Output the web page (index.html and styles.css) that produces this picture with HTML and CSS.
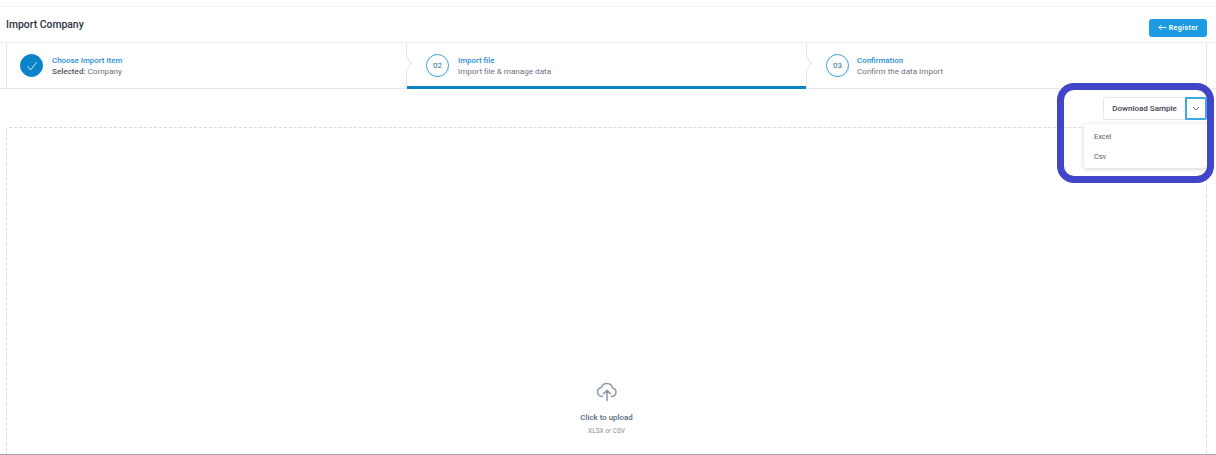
FILE: index.html
```html
<!DOCTYPE html>
<html lang="en">
<head>
    <meta charset="UTF-8">
    <title>Import Company</title>
    <link rel="stylesheet" href="styles.css">
</head>
<body>
    <div class="page">
        <!-- Header -->
        <div class="header">
            <h1>Import Company</h1>
            <button class="btn-register">
                <svg width="9" height="7" viewBox="0 0 9 7"><path d="M8.5 3.5 H1 M3.5 1 L1 3.5 L3.5 6" fill="none" stroke="#fff" stroke-width="1"/></svg>
                Register
            </button>
        </div>

        <!-- Steps -->
        <div class="steps">
            <div class="step">
                <span class="step-circle done">
                    <svg width="12" height="12" viewBox="0 0 12 12"><path d="M1.5 6.5 L4.6 10 L10.8 2" fill="none" stroke="#fff" stroke-width="0.8"/></svg>
                </span>
                <div>
                    <div class="step-title">Choose Import Item</div>
                    <div class="step-sub"><b>Selected:</b> Company</div>
                </div>
                <span class="chevron"></span>
            </div>
            <div class="step active">
                <span class="step-circle">02</span>
                <div>
                    <div class="step-title">Import file</div>
                    <div class="step-sub">Import file &amp; manage data</div>
                </div>
                <span class="chevron"></span>
            </div>
            <div class="step">
                <span class="step-circle">03</span>
                <div>
                    <div class="step-title">Confirmation</div>
                    <div class="step-sub">Confirm the data Import</div>
                </div>
            </div>
        </div>

        <!-- Download -->
        <div class="toolbar">
            <div class="split">
                <button class="btn-download">Download Sample</button>
                <button class="btn-caret">
                    <svg width="8" height="5" viewBox="0 0 8 5"><path d="M1 1 L4 4 L7 1" fill="none" stroke="#555" stroke-width="0.9"/></svg>
                </button>
                <div class="dropdown">
                    <div class="dropdown-item">Excel</div>
                    <div class="dropdown-item">Csv</div>
                </div>
            </div>
            <div class="highlight"></div>
        </div>

        <!-- Upload -->
        <div class="dropzone">
            <svg width="22" height="22" viewBox="0 0 22 22" fill="none" stroke="#8d98a8" stroke-width="1.5" stroke-linecap="round" stroke-linejoin="round">
                <path d="M6.5 16.5 H6 A4.6 4.6 0 0 1 5.2 7.4 A6 6 0 0 1 16.6 7.9 A4.4 4.4 0 0 1 16.4 16.5 H15.5"/>
                <path d="M11 20.5 V10.5 M7.6 13.6 L11 10.2 L14.4 13.6"/>
            </svg>
            <div class="upload-title">Click to upload</div>
            <div class="upload-sub">XLSX or CSV</div>
        </div>
    </div>
</body>
</html>
```

FILE: styles.css
```css
* { margin: 0; padding: 0; box-sizing: border-box; font-family: Roboto, sans-serif; }
html, body { height: 455px; overflow: hidden; background: #fff; }

.page { height: 455px; padding-top: 6px; border-bottom: 1px solid #a8a8a8; display: flex; flex-direction: column; }

/* Header */
.header { height: 36px; flex: none; border-top: 1px solid #eee; display: flex; align-items: center; justify-content: space-between; padding: 0 9px 0 6px; }
h1 { font-size: 10.4px; font-weight: 500; color: #2b3340; }
.btn-register { width: 58px; height: 18px; margin-top: 6px; border: none; border-radius: 3px; background: #1a9be2; color: #fff; font-size: 7px; font-weight: 700; letter-spacing: 0.4px; display: flex; align-items: center; justify-content: center; gap: 2px; }

/* Steps */
.steps { height: 47px; flex: none; padding: 0 9px 0 6px; border-top: 1px solid #eee; border-bottom: 1px solid #e6e6e6; display: grid; grid-template-columns: 400px 400px 401px; }
.step { position: relative; display: flex; align-items: center; gap: 9px; padding: 0 0 0 13px; border-left: 1px solid #e8e8e8; }
.step:last-child { border-right: 1px solid #e8e8e8; }
.step.active { padding-left: 19px; }
.step.active::after { content: ""; position: absolute; left: 0; right: 0; bottom: -1px; height: 3px; background: #0a84c8; }
.step:last-child { padding-left: 19px; gap: 8px; }
.step-circle { width: 23px; height: 23px; flex: none; border: 1px solid #3aa0dc; border-radius: 50%; display: flex; align-items: center; justify-content: center; font-size: 8px; color: #2a6f9c; }
.step-circle.done { background: #0a84c8; border-color: #0a84c8; }
.step-title { font-size: 7.9px; line-height: 11px; font-weight: 500; color: #1f8fd6; }
.step-sub { font-size: 8.1px; line-height: 10px; color: #6b7280; }
.step-sub b { font-weight: 500; color: #4b5563; }
.chevron { position: absolute; right: -5px; top: 16px; width: 9px; height: 9px; background: #fff; border-top: 1px solid #e4e4e4; border-right: 1px solid #e4e4e4; transform: rotate(45deg) skew(10deg, 10deg); z-index: 1; }

/* Download */
.toolbar { position: relative; height: 38px; flex: none; display: flex; justify-content: flex-end; align-items: flex-start; padding: 8px 9px 0 0; }
.split { position: relative; display: flex; height: 23px; }
.btn-download { width: 82px; border: 1px solid #e3e5e8; border-right: none; border-radius: 3px 0 0 3px; background: #fff; font-size: 8px; font-weight: 500; color: #3d4450; }
.btn-caret { width: 22px; border: 2px solid #3fa9e8; border-radius: 0 2px 2px 0; background: #fff; display: flex; align-items: center; justify-content: center; }
.dropdown { position: absolute; top: 27px; left: -19px; width: 123px; height: 44px; padding-top: 3px; background: #fff; border-radius: 3px 0 0 3px; box-shadow: 0 1px 5px rgba(0, 0, 0, 0.18); z-index: 2; }
.dropdown-item { height: 20px; padding-left: 10px; font-size: 7.4px; line-height: 20px; color: #555c68; }
.highlight { position: absolute; top: -6px; right: 2px; width: 157px; height: 100px; border: 7px solid #4145c8; border-radius: 17px; z-index: 3; pointer-events: none; }

/* Upload */
.dropzone { flex: 1; margin: 0 9px 0 6px; border: 1px dashed #dcdcdc; border-bottom: none; border-radius: 3px 3px 0 0; display: flex; flex-direction: column; align-items: center; justify-content: flex-end; padding-bottom: 18px; }
.upload-title { margin-top: 10px; font-size: 7.9px; line-height: 11px; font-weight: 500; color: #5a6a80; }
.upload-sub { margin-top: 4px; font-size: 6.5px; line-height: 9px; color: #8a8f98; }
```
